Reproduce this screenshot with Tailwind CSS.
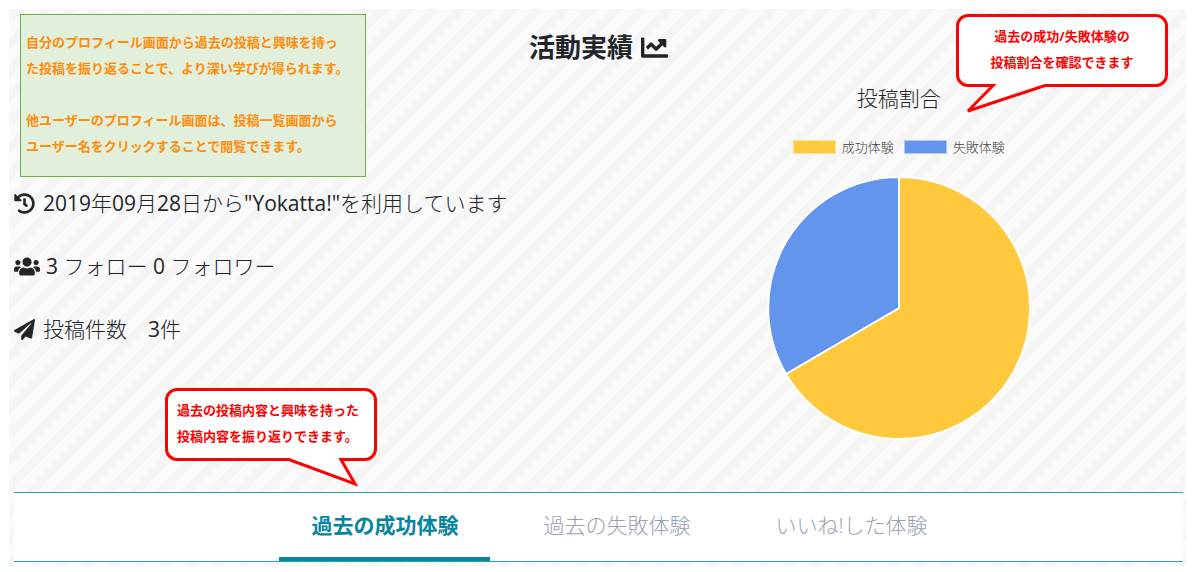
<!DOCTYPE html>
<html lang="ja">
<head>
<meta charset="utf-8">
<meta name="viewport" content="width=device-width, initial-scale=1">
<title>活動実績</title>
<script src="https://cdn.jsdelivr.net/npm/@tailwindcss/browser@4"></script>
</head>
<body class="bg-white font-['Open_Sans','Noto_Sans_CJK_JP',sans-serif] text-[#212529]">
<div class="relative mt-[9px] mr-[6px] ml-[9px] bg-[linear-gradient(135deg,#fafafa_25%,#f5f5f5_25%,#f5f5f5_50%,#fafafa_50%,#fafafa_75%,#f5f5f5_75%)] bg-[length:26px_26px] bg-[position:16px_0px] pr-[3px] pb-1 pl-[5px]">
  <main>
    <h1 class="flex items-center justify-center gap-2 pt-5 text-[26px] leading-9 font-bold">活動実績
      <svg class="size-[27px]" viewBox="0 0 512 512" fill="currentColor" aria-hidden="true"><path d="M496 384H64V80c0-8.840-7.160-16-16-16H16C7.160 64 0 71.160 0 80v336c0 17.670 14.330 32 32 32h464c8.840 0 16-7.160 16-16v-32c0-8.840-7.160-16-16-16zM464 96H345.940c-21.380 0-32.090 25.850-16.970 40.970l32.400 32.400L288 242.750l-73.370-73.370c-12.500-12.500-32.760-12.500-45.250 0l-68.690 68.690c-6.250 6.250-6.250 16.380 0 22.630l22.620 22.620c6.250 6.250 16.380 6.250 22.630 0L192 237.250l73.370 73.370c12.500 12.500 32.760 12.500 45.250 0l96-96 32.400 32.400c15.120 15.120 40.970 4.410 40.970-16.970V112c.01-8.840-7.150-16-15.990-16z"/></svg>
    </h1>
    <div class="grid grid-cols-2">
      <ul class="pt-[123px] text-[21px] leading-[31px] font-light">
        <li class="mb-8 flex items-center gap-2">
          <svg class="size-[21px]" viewBox="0 0 512 512" fill="currentColor" aria-hidden="true"><path d="M504 255.531c.253 136.640-111.180 248.372-247.820 248.468-59.015.042-113.223-20.530-155.822-54.911-11.077-8.940-11.905-25.541-1.839-35.607l11.267-11.267c8.609-8.609 22.353-9.551 31.891-1.984C173.062 425.135 212.781 440 256 440c101.705 0 184-82.311 184-184 0-101.705-82.311-184-184-184-48.814 0-93.149 18.969-126.068 49.932l50.754 50.754c10.080 10.080 2.941 27.314-11.313 27.314H24c-8.837 0-16-7.163-16-16V38.627c0-14.254 17.234-21.393 27.314-11.314l49.372 49.372C129.209 34.136 189.552 8 256 8c136.810 0 247.747 110.780 248 247.531zm-180.912 78.784l9.823-12.630c8.138-10.463 6.253-25.542-4.210-33.679L288 256.349V152c0-13.255-10.745-24-24-24h-16c-13.255 0-24 10.745-24 24v135.651l65.409 50.874c10.463 8.137 25.541 6.253 33.679-4.210z"/></svg>
          <span><b class="font-normal">2019</b>年<b class="font-normal">09</b>月<b class="font-normal">28</b>日から<b class="font-normal">"Yokatta!"</b>を利用しています</span>
        </li>
        <li class="mb-8 flex items-center gap-[6px]">
          <svg class="h-[21px] w-[26px]" viewBox="0 0 640 512" fill="currentColor" aria-hidden="true"><path d="M96 224c35.300 0 64-28.700 64-64s-28.700-64-64-64-64 28.700-64 64 28.700 64 64 64zm448 0c35.300 0 64-28.700 64-64s-28.700-64-64-64-64 28.700-64 64 28.700 64 64 64zm32 32h-64c-17.600 0-33.500 7.100-45.100 18.600 40.300 22.100 68.900 62 75.100 109.400h66c17.700 0 32-14.300 32-32v-32c0-35.300-28.700-64-64-64zm-256 0c61.900 0 112-50.100 112-112S381.900 32 320 32 208 82.100 208 144s50.100 112 112 112zm76.800 32h-8.300c-20.800 10-43.900 16-68.500 16s-47.600-6-68.500-16h-8.300C179.600 288 128 339.600 128 403.200V432c0 26.500 21.500 48 48 48h288c26.500 0 48-21.500 48-48v-28.800c0-63.600-51.600-115.200-115.200-115.200zm-223.700-13.400C161.500 263.100 145.600 256 128 256H64c-35.300 0-64 28.700-64 64v32c0 17.700 14.300 32 32 32h65.900c6.300-47.400 34.900-87.300 75.200-109.400z"/></svg>
          <span><b class="font-normal">3</b> フォロー <b class="font-normal">0</b> フォロワー</span>
        </li>
        <li class="flex items-center gap-2">
          <svg class="size-[21px]" viewBox="0 0 512 512" fill="currentColor" aria-hidden="true"><path d="M476 3.200L12.500 270.600c-18.100 10.400-15.800 35.600 2.200 43.200L121 358.400l287.300-253.200c5.500-4.900 13.300 2.600 8.600 8.300L176 407v80.500c0 23.600 28.500 32.900 42.500 15.800L282 426l124.600 52.200c14.200 6 30.400-2.900 33-18.200l72-432C515 7.800 493.300-6.800 476 3.200z"/></svg>
          <span>投稿件数　<b class="font-normal">3</b>件</span>
        </li>
      </ul>
      <section class="flex flex-col items-center pt-[17px] pl-4">
        <h2 class="text-[21px] leading-8 font-light">投稿割合</h2>
        <div class="mt-6 flex gap-[10px] text-[13px] leading-[18px] font-light text-[#444]">
          <span class="flex items-center gap-[6px]"><i class="h-[14px] w-[43px] border border-[#ffe394] bg-[#ffc83d]"></i>成功体験</span>
          <span class="flex items-center gap-[6px]"><i class="h-[14px] w-[43px] border border-[#b1c9f6] bg-[#6495ed]"></i>失敗体験</span>
        </div>
        <svg class="mt-5 size-[264px]" viewBox="0 0 264 264" role="img" aria-label="投稿割合" stroke="#fff" stroke-width="2">
          <path fill="#ffc83d" d="M132 132V1A131 131 0 1 1 19 198Z"/>
          <path fill="#6495ed" d="M132 132L19 198A131 131 0 0 1 132 1Z"/>
        </svg>
      </section>
    </div>
  </main>
  <nav class="mt-[52px] flex justify-center gap-[21px] border-y border-[#2b9fb8] bg-white pl-[42px] text-[21px] leading-8">
    <a href="#success" aria-current="page" class="border-b-4 border-[#0784a0] px-8 pt-4 pb-4 font-bold text-[#0784a0]">過去の成功体験</a>
    <a href="#failure" class="border-b-4 border-transparent px-8 pt-4 pb-4 font-light text-[#98a2b0]">過去の失敗体験</a>
    <a href="#liked" class="border-b-4 border-transparent px-8 pt-4 pb-4 font-light text-[#98a2b0]">いいね!した体験</a>
  </nav>

  <aside class="absolute top-[5px] left-[11px] w-[346px] border border-[#70ad47] bg-[#e2efda] px-[5px] pt-[14px] pb-[17px] text-[13px] leading-[26px] font-bold whitespace-nowrap text-[#ff8c0a]">
    <p>自分のプロフィール画面から過去の投稿と興味を持っ<br>た投稿を振り返ることで、より深い学びが得られます。</p>
    <p class="mt-[26px]">他ユーザーのプロフィール画面は、投稿一覧画面から<br>ユーザー名をクリックすることで閲覧できます。</p>
  </aside>

  <aside class="absolute top-[5px] right-[18px] w-[212px] pt-[9px] text-center text-[13px] leading-[26px] font-bold text-[#f00]">
    <svg class="absolute top-0 left-0 h-[102px] w-[212px]" viewBox="0 0 212 102" fill="#fff" stroke="#f00" stroke-width="3" aria-hidden="true"><path d="M12 1.500H200A10.500 10.500 0 0 1 210.500 12V61A10.500 10.500 0 0 1 200 71.500H89L12 97L37 71.500H12A10.500 10.500 0 0 1 1.500 61V12A10.500 10.500 0 0 1 12 1.500Z"/></svg>
    <p class="relative">過去の成功/失敗体験の<br>投稿割合を確認できます</p>
  </aside>

  <aside class="absolute top-[379px] left-[156px] w-[212px] pt-[9px] pl-3 text-[13px] leading-[26px] font-bold whitespace-nowrap text-[#f00]">
    <svg class="absolute top-0 left-0 h-[102px] w-[212px]" viewBox="0 0 212 102" fill="#fff" stroke="#f00" stroke-width="3" aria-hidden="true"><path d="M12 1.500H200A10.500 10.500 0 0 1 210.500 12V61A10.500 10.500 0 0 1 200 71.500H176L190 96L124 71.500H12A10.500 10.500 0 0 1 1.500 61V12A10.500 10.500 0 0 1 12 1.500Z"/></svg>
    <p class="relative">過去の投稿内容と興味を持った<br>投稿内容を振り返りできます。</p>
  </aside>
</div>
</body>
</html>
